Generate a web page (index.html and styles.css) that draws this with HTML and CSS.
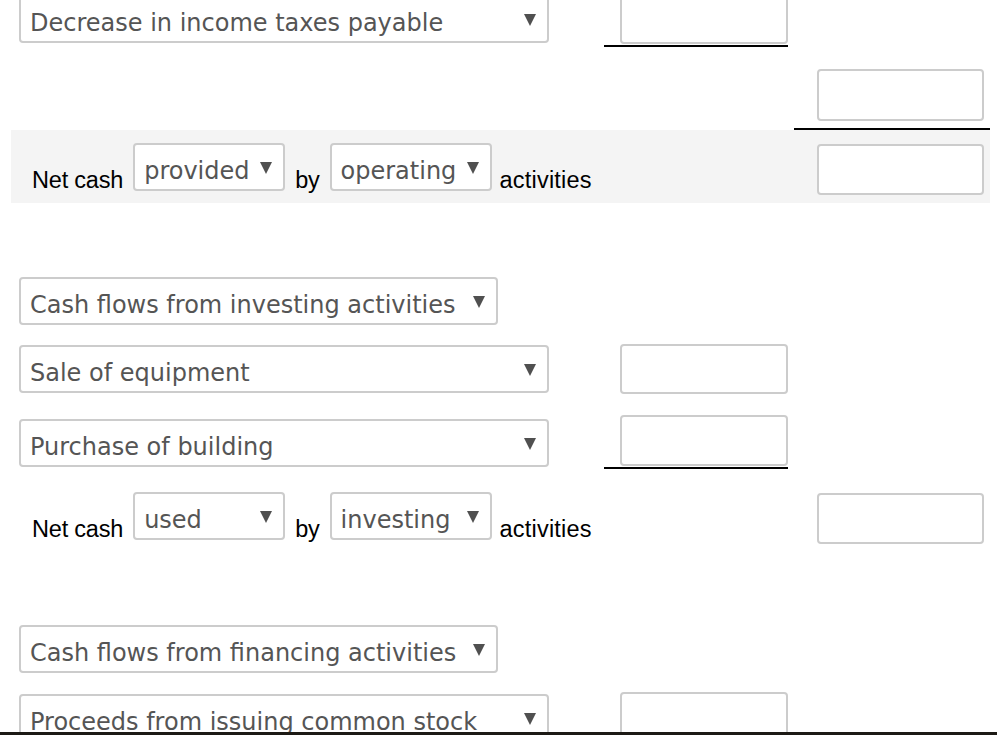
FILE: index.html
```html
<!DOCTYPE html>
<html>
<head>
<meta charset="utf-8">
<link rel="stylesheet" href="styles.css">
</head>
<body>
<div class="sheet">
  <div class="row r1">
    <div class="c1"><div class="sel w-full"><span class="txt">Decrease in income taxes payable</span><span class="arr"></span></div></div>
    <div class="c2"><div class="ul ul2"><div class="box b2 h49"></div></div></div>
  </div>
  <div class="row r2">
    <div class="c1"></div>
    <div class="c2"></div>
    <div class="c3"><div class="ul ul3"><div class="box b3 total"></div></div></div>
  </div>
  <div class="netrow band">
    <span class="lbl">Net cash</span>
    <div class="sel w-small"><span class="txt">provided</span><span class="arr"></span></div>
    <span class="lbl">by</span>
    <div class="sel w-mid"><span class="txt">operating</span><span class="arr"></span></div>
    <span class="lbl lbl-last">activities</span>
    <div class="box b3 net"></div>
  </div>
  <div class="row r-inv">
    <div class="c1"><div class="sel w-head"><span class="txt">Cash flows from investing activities</span><span class="arr"></span></div></div>
  </div>
  <div class="row r-sale">
    <div class="c1"><div class="sel w-full mt1"><span class="txt">Sale of equipment</span><span class="arr"></span></div></div>
    <div class="c2"><div class="plainbox"><div class="box b2 nomb h50"></div></div></div>
  </div>
  <div class="row r-purch">
    <div class="c1"><div class="sel w-full mt4"><span class="txt">Purchase of building</span><span class="arr"></span></div></div>
    <div class="c2"><div class="ul ul2"><div class="box b2 h51"></div></div></div>
  </div>
  <div class="netrow plain">
    <span class="lbl">Net cash</span>
    <div class="sel w-small"><span class="txt">used</span><span class="arr"></span></div>
    <span class="lbl">by</span>
    <div class="sel w-mid"><span class="txt">investing</span><span class="arr"></span></div>
    <span class="lbl lbl-last">activities</span>
    <div class="box b3 net"></div>
  </div>
  <div class="row r-fin">
    <div class="c1"><div class="sel w-head"><span class="txt">Cash flows from financing activities</span><span class="arr"></span></div></div>
  </div>
  <div class="row r-proc">
    <div class="c1"><div class="sel w-full mt2"><span class="txt">Proceeds from issuing common stock</span><span class="arr"></span></div></div>
    <div class="c2"><div class="plainbox"><div class="box b2 nomb h50"></div></div></div>
  </div>
</div>
<div class="bottom-bar"></div>
</body>
</html>
```
FILE: styles.css
```css
html, body {
  margin: 0;
  padding: 0;
  background: #ffffff;
  overflow: hidden;
}
body {
  width: 997px;
  height: 735px;
}
.sheet {
  margin-top: -5px;
  width: 997px;
}
.row {
  display: flex;
  align-items: flex-start;
}
.c1 {
  width: 604px;
  padding-left: 19px;
  box-sizing: border-box;
  flex: none;
}
.c2 {
  width: 190px;
  flex: none;
}
.c3 {
  width: 196px;
  flex: none;
}
.sel {
  position: relative;
  box-sizing: border-box;
  height: 48px;
  border: 2px solid #cccccc;
  border-radius: 4px;
  background: #ffffff;
  padding: 12px 0 0 9px;
  font-family: "DejaVu Sans", Verdana, sans-serif;
  font-size: 24px;
  line-height: 28px;
  color: #555555;
  white-space: nowrap;
  flex: none;
}
.arr {
  position: absolute;
  right: 11px;
  top: 17px;
  width: 0;
  height: 0;
  border-left: 6px solid transparent;
  border-right: 6px solid transparent;
  border-top: 12px solid #505050;
}
.w-full { width: 530px; }
.w-head { width: 479px; }
.w-small { width: 152px; }
.w-mid { width: 162px; }
.mt1 { margin-top: 1px; }
.mt2 { margin-top: 2px; }
.mt4 { margin-top: 4px; }
.box {
  box-sizing: border-box;
  border: 2px solid #cccccc;
  border-radius: 4px;
  background: #ffffff;
}
.ul {
  border-bottom: 2px solid #000000;
}
.ul2 {
  width: 184px;
}
.ul3 {
  width: 196px;
}
.plainbox {
  width: 184px;
}
.b2 {
  width: 168px;
  margin-left: 16px;
  margin-bottom: 1px;
}
.b2.nomb {
  margin-bottom: 0;
}
.h49 { height: 49px; }
.h50 { height: 50px; }
.h51 { height: 51px; }
.b3 {
  width: 167px;
}
.b3.total {
  margin-left: 23px;
  margin-top: 22px;
  margin-bottom: 7px;
  height: 52px;
}
.netrow {
  display: flex;
  align-items: flex-start;
  margin-left: 11px;
  width: 979px;
  box-sizing: border-box;
  padding-left: 21px;
}
.band {
  background: #f4f4f4;
  height: 73px;
  padding-top: 13px;
}
.plain {
  margin-top: 23px;
  height: 52px;
}
.lbl {
  font-family: "Liberation Sans", Arial, sans-serif;
  font-size: 23.5px;
  line-height: 26px;
  color: #000000;
  margin-top: 24px;
  margin-right: 10px;
  white-space: nowrap;
  letter-spacing: -0.2px;
}
.sel + .lbl {
  margin-left: 10px;
}
.lbl-last {
  margin-left: 8px !important;
  letter-spacing: 0.2px;
}
.box.net {
  margin-left: auto;
  margin-right: 6px;
  margin-top: 1px;
  height: 51px;
}
.r-inv { margin-top: 74px; }
.r-sale { margin-top: 19px; }
.r-purch { margin-top: 21px; }
.r-fin { margin-top: 81px; }
.r-proc { margin-top: 19px; }
.bottom-bar {
  position: fixed;
  left: 0;
  right: 0;
  bottom: 0;
  height: 3px;
  background: #1d1a15;
}
```
